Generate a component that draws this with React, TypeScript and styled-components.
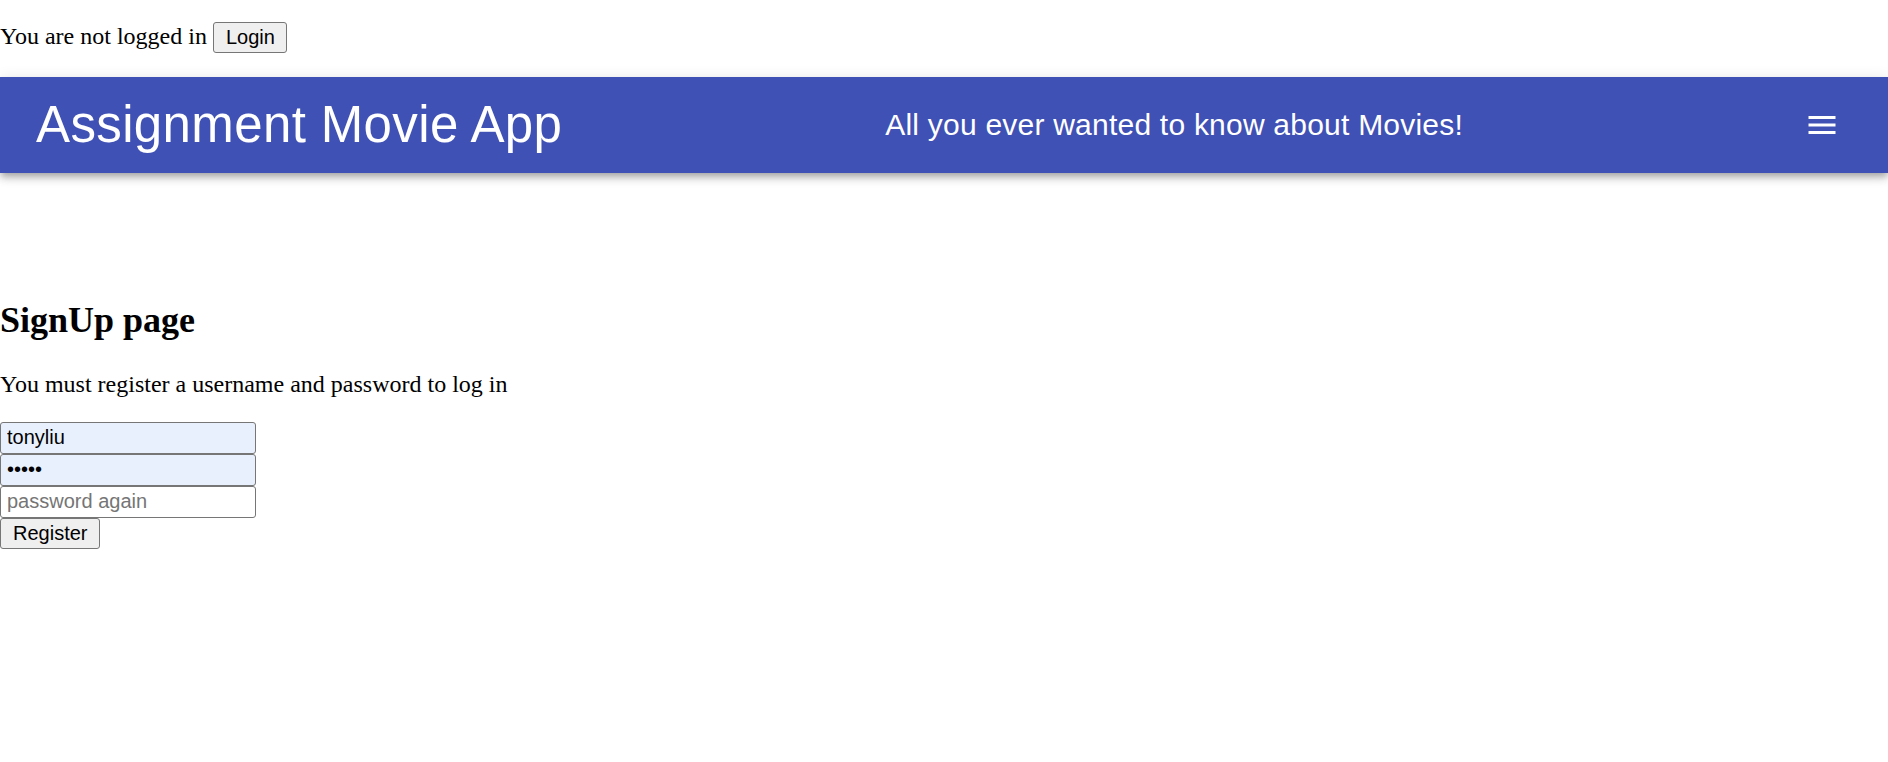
import React from "react";
import styled, { createGlobalStyle } from "styled-components";

const GlobalStyle = createGlobalStyle`
  html, body {
    margin: 0;
    padding: 0;
    background: #ffffff;
  }
  body {
    font-family: "Liberation Serif", "Times New Roman", serif;
    font-size: 24px;
    color: #000000;
  }
  * {
    box-sizing: border-box;
  }
`;

const StatusLine = styled.div`
  display: flex;
  align-items: baseline;
  gap: 6px;
  padding-top: 22px;
  margin-bottom: 24px;
  line-height: normal;
`;

const StatusText = styled.span`
  font-size: 24px;
`;

const NativeButton = styled.button`
  font-family: "Liberation Sans", Arial, sans-serif;
  font-size: 20px;
  line-height: normal;
  height: 31px;
  padding: 0 11.5px 0 12px;
  color: #000000;
  background: #efefef;
  border: 1px solid #767676;
  border-radius: 3px;
  cursor: default;
`;

const AppBar = styled.header`
  display: flex;
  align-items: center;
  height: 96px;
  padding: 0 30px 0 36px;
  background: #3f51b5;
  color: #ffffff;
  box-shadow: 0px 3px 6px -1.5px rgba(0, 0, 0, 0.2),
    0px 6px 7.5px 0px rgba(0, 0, 0, 0.14),
    0px 1.5px 15px 0px rgba(0, 0, 0, 0.12);
  position: relative;
  z-index: 1;
`;

const Title = styled.h4`
  flex-grow: 1;
  margin: 0;
  font-family: "Liberation Sans", Arial, sans-serif;
  font-size: 51px;
  font-weight: 400;
  line-height: 1.235;
  letter-spacing: 0.00735em;
`;

const Subtitle = styled.h6`
  flex-grow: 1;
  margin: 0;
  font-family: "Liberation Sans", Arial, sans-serif;
  font-size: 30px;
  font-weight: 500;
  line-height: 1.6;
  letter-spacing: 0.0075em;
`;

const IconButton = styled.button`
  display: inline-flex;
  align-items: center;
  justify-content: center;
  width: 72px;
  height: 72px;
  padding: 18px;
  border: 0;
  border-radius: 50%;
  background: transparent;
  color: inherit;
  cursor: pointer;
`;

const Main = styled.main`
  padding-top: 96px;
`;

const Heading = styled.h2`
  margin: 29.88px 0;
  font-size: 36px;
  font-weight: 700;
  line-height: normal;
`;

const Paragraph = styled.p`
  margin: 24px 0;
  font-size: 24px;
  line-height: normal;
`;

const Form = styled.form`
  display: flex;
  flex-direction: column;
  align-items: flex-start;
`;

const TextInput = styled.input<{ $filled?: boolean }>`
  width: 256px;
  height: 32px;
  padding: 0 6px;
  font-family: "Liberation Sans", Arial, sans-serif;
  font-size: 20px;
  color: #000000;
  background: ${(p) => (p.$filled ? "#e8f0fe" : "#ffffff")};
  border: 1px solid #767676;
  border-radius: 3px;
  outline: none;

  &::placeholder {
    color: #757575;
  }
`;

const MenuIcon = () => (
  <svg width="36" height="36" viewBox="0 0 24 24" fill="currentColor" aria-hidden="true">
    <path d="M3 18h18v-2H3v2zm0-5h18v-2H3v2zm0-7v2h18V6H3z" />
  </svg>
);

export default function App() {
  return (
    <>
      <GlobalStyle />
      <StatusLine>
        <StatusText>You are not logged in</StatusText>
        <NativeButton type="button">Login</NativeButton>
      </StatusLine>
      <AppBar>
        <Title>Assignment Movie App</Title>
        <Subtitle>All you ever wanted to know about Movies!</Subtitle>
        <IconButton type="button" aria-label="menu">
          <MenuIcon />
        </IconButton>
      </AppBar>
      <Main>
        <Heading>SignUp page</Heading>
        <Paragraph>You must register a username and password to log in</Paragraph>
        <Form onSubmit={(e) => e.preventDefault()}>
          <TextInput $filled type="text" defaultValue="tonyliu" placeholder="user name" />
          <TextInput $filled type="password" defaultValue="12345" placeholder="password" />
          <TextInput type="password" placeholder="password again" />
          <NativeButton type="submit">Register</NativeButton>
        </Form>
      </Main>
    </>
  );
}
